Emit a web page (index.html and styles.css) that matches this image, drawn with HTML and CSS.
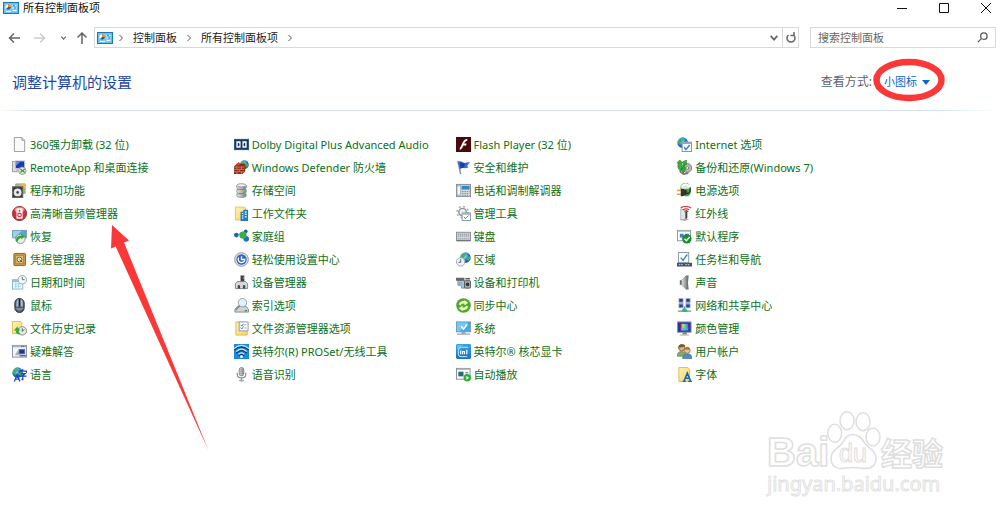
FILE: index.html
```html
<!DOCTYPE html>
<html lang="zh-CN">
<head>
<meta charset="utf-8">
<title>所有控制面板项</title>
<link rel="stylesheet" href="styles.css">
</head>
<body>
<svg class="defs" aria-hidden="true">
  <defs>
    <linearGradient id="gBlue" x2="0" y2="1"><stop stop-color="#3ba2e6"/><stop offset="1" stop-color="#1374c4"/></linearGradient>
    <radialGradient id="gGlobe" cx=".4" cy=".35"><stop stop-color="#c9f1ff"/><stop offset=".6" stop-color="#3b9be0"/><stop offset="1" stop-color="#1558b5"/></radialGradient>
    <linearGradient id="gGrey"><stop stop-color="#e8e8e8"/><stop offset="1" stop-color="#8a8a8a"/></linearGradient>
    <linearGradient id="gFold" x2="1" y2="1"><stop stop-color="#fff3b0"/><stop offset="1" stop-color="#f6d467"/></linearGradient>
    <linearGradient id="gRain"><stop stop-color="#f22"/><stop offset=".3" stop-color="#e3e32b"/><stop offset=".6" stop-color="#1edce0"/><stop offset="1" stop-color="#c22be8"/></linearGradient>
  </defs>
  <symbol id="panel" viewBox="0 0 16 12">
    <rect x=".5" y=".5" width="15" height="11" fill="#5cb8ec" stroke="#1878b8"/>
    <rect x="1.500" y="1.500" width="13" height="9" fill="#7cc9f3"/>
    <circle cx="5" cy="5" r="2.600" fill="#fff"/><path d="M5 5V2a3 3 0 0 1 3 3z" fill="#f08a24"/><path d="M5 5h3a3 3 0 0 1-5 2z" fill="#1d5fae"/>
    <path d="M9.500 3.500h4M9.500 6h4M9.500 8.500h4M3 9.500h5" stroke="#fff" stroke-width="1.200"/><circle cx="11" cy="3.500" r=".8" fill="#1d5fae"/><circle cx="12" cy="6" r=".8" fill="#1d5fae"/>
  </symbol>
  <symbol id="globe" viewBox="0 0 16 16">
    <circle cx="8" cy="8" r="7.500" fill="url(#gGlobe)"/>
    <path d="M3 4l3-2 3 1-1 3-3 2-1 3-2-3zM10 7l4-1 1 3-3 4-2-2z" fill="#45b34b"/>
  </symbol>
</svg>

<header class="titlebar">
  <svg class="app-icon"><use href="#panel"/></svg>
  <span class="window-title">所有控制面板项</span>
  <div class="window-controls">
    <button type="button" aria-label="最小化"><svg viewBox="0 0 12 12"><path d="M1 6.500h10"/></svg></button>
    <button type="button" aria-label="最大化"><svg viewBox="0 0 12 12"><path d="M1.500 1.500h9v9h-9z"/></svg></button>
    <button type="button" aria-label="关闭"><svg viewBox="0 0 12 12"><path d="M1 1l10 10M11 1L1 11"/></svg></button>
  </div>
</header>

<div class="toolbar">
  <div class="nav-buttons">
    <button type="button" aria-label="后退"><svg viewBox="0 0 12 12"><path d="M12 6H1.500M6 1.500L1.500 6 6 10.500"/></svg></button>
    <button type="button" class="off" aria-label="前进"><svg viewBox="0 0 12 12"><path d="M0 6h10.500M6 1.500L10.500 6 6 10.500"/></svg></button>
    <button type="button" class="small" aria-label="最近位置"><svg viewBox="0 0 12 12"><path d="M2 3.500l4 4.500 4-4.500" stroke-width="2"/></svg></button>
    <button type="button" aria-label="向上"><svg viewBox="0 0 12 12"><path d="M6 12V1M1.500 5.500L6 1l4.500 4.500"/></svg></button>
  </div>
  <div class="address">
    <svg class="app-icon"><use href="#panel"/></svg>
    <nav class="crumbs" aria-label="路径">
      <svg class="sep" viewBox="0 0 6 6"><path d="M1.500 0l3 3-3 3"/></svg>
      <a href="#">控制面板</a>
      <svg class="sep" viewBox="0 0 6 6"><path d="M1.500 0l3 3-3 3"/></svg>
      <a href="#">所有控制面板项</a>
      <svg class="sep" viewBox="0 0 6 6"><path d="M1.500 0l3 3-3 3"/></svg>
    </nav>
    <button type="button" class="drop" aria-label="历史"><svg viewBox="0 0 12 12"><path d="M2 3.500L6 8l4-4.500"/></svg></button>
    <button type="button" class="refresh" aria-label="刷新"><svg viewBox="0 0 12 12"><path d="M8.500 3a4 4 0 1 1-5 0M9 0v3.500H5.500"/></svg></button>
  </div>
  <label class="search">
    <input type="search" placeholder="搜索控制面板" aria-label="搜索控制面板">
    <svg viewBox="0 0 12 12"><circle cx="7.500" cy="4.500" r="3.500"/><path d="M5 7L1 11"/></svg>
  </label>
</div>

<main>
  <div class="heading">
    <h1>调整计算机的设置</h1>
    <div class="view">
      <label for="view">查看方式:</label>
      <div class="view-select">
        <select id="view"><option>小图标</option><option>大图标</option><option>类别</option></select>
        <svg class="caret" viewBox="0 0 8 5"><path d="M0 0h8L4 5z"/></svg>
        <svg class="ring" viewBox="0 0 72 44"><ellipse cx="36" cy="22" rx="32.500" ry="18"/></svg>
      </div>
    </div>
  </div>

  <ul class="items">
    <li><a href="#"><svg viewBox="0 0 16 16"><path d="M2.500 .5h8l3 3v12h-11z" fill="#fafafa" stroke="#999"/><path d="M10.500 .5v3h3" fill="#ddd" stroke="#999"/></svg>360强力卸载 (32 位)</a></li>
    <li><a href="#"><svg viewBox="0 0 16 16"><rect y="2" width="16" height="12" fill="#2b5f94"/><rect x="1" y="3" width="14" height="10" fill="#16395e"/><path d="M2.500 4.500H7v7H2.500zM13.500 4.500H9v7h4.500z" fill="#fff"/><path d="M4 6a2 2 0 0 1 0 4zM12 6a2 2 0 0 0 0 4z" fill="#16395e"/></svg>Dolby Digital Plus Advanced Audio</a></li>
    <li><a href="#"><svg viewBox="0 0 16 16"><rect width="16" height="16" fill="#4a0a0c"/><path d="M12 3C8.500 3 8 6 7 8.500S5.500 12.500 4 12.500M7 8h4" stroke="#fff" stroke-width="2" fill="none"/></svg>Flash Player (32 位)</a></li>
    <li><a href="#"><svg viewBox="0 0 16 16"><use href="#globe" width="12" height="12"/><rect x="5.500" y="5.500" width="10" height="10" fill="#fff" stroke="#7d92a8"/><path d="M5.500 6.500h10" stroke="#8fa8c0" stroke-width="2"/><path d="M7.500 11l2 2.500 4-5" fill="none" stroke="#2c7fd6" stroke-width="1.500"/></svg>Internet 选项</a></li>

    <li><a href="#"><svg viewBox="0 0 16 16"><rect x=".5" y="1.500" width="5" height="11" fill="#ddd" stroke="#999"/><rect x="3.500" y="1" width="10" height="8" fill="#1b37b8" stroke="#c7c7cf"/><path d="M4 1.500l5 0-5 5z" fill="#6a8cf0"/><circle cx="11" cy="11.500" r="4" fill="#e4e4e4" stroke="#999"/><path d="M9 9.500l2 2-2 2M13.500 9.500l-2 2 2 2" stroke="#2ea32e" stroke-width="1.300" fill="none"/></svg>RemoteApp 和桌面连接</a></li>
    <li><a href="#"><svg viewBox="0 0 16 16"><use href="#globe" x="6" width="10" height="10"/><path d="M0 7l3-3h9v8l-3 3H0z" fill="#8c2d1a"/><path d="M0 7.500h11M0 10h11M0 12.500h11M3 7v3M8 7v3M5.500 10v2.500M3 12.500V15M8 12.500V15" stroke="#d98b70" stroke-width=".8"/><path d="M2 5l3-3 2 2-2 2z" fill="#c94b28"/></svg>Windows Defender 防火墙</a></li>
    <li><a href="#"><svg viewBox="0 0 16 16"><path d="M2 1l3 14" stroke="#8594a8" stroke-width="1.600"/><path d="M2 2c4-2 5 2 8 1l5-1-3 4 1 2c-4 2-6-1-9 2z" fill="#3e6bd0"/><path d="M4 3c3-1 4 1 6 1l-2 4-3 1z" fill="#1c3fa2"/></svg>安全和维护</a></li>
    <li><a href="#"><svg viewBox="0 0 16 16"><circle cx="11" cy="8.500" r="4.700" fill="#b8b8b8" stroke="#777"/><circle cx="11" cy="8.500" r="1.500" fill="#fff" stroke="#777"/><path d="M0 3l3-3 3 3H4.500l2 5-3 4L1 8V3zM6 2l4-2 0 5-2 0 1 5-2 4-3-4 3-3z" fill="#3caf38" stroke="#1d7a1f" stroke-width=".6"/><path d="M3 12l4 3 5-1" stroke="#777" stroke-width="2" fill="none"/></svg>备份和还原(Windows 7)</a></li>

    <li><a href="#"><svg viewBox="0 0 16 16"><path d="M4 1h10v10H4z" fill="#9acb6a" stroke="#999"/><path d="M9 1h5v5H9z" fill="#f5b24e"/><rect x=".5" y="4" width="11" height="11.500" fill="#343a40" stroke="#666"/><circle cx="6" cy="10" r="4.200" fill="#e6e9ec"/><circle cx="6" cy="10" r="1.400" fill="#444"/></svg>程序和功能</a></li>
    <li><a href="#"><svg viewBox="0 0 16 16"><g fill="url(#gGrey)" stroke="#777" stroke-width=".7"><path d="M3 11.500v2c0 2.500 10 2.500 10 0v-2zM3 7v2.500c0 2.500 10 2.500 10 0V7zM3 2.500V5c0 2.500 10 2.500 10 0V2.500z"/><ellipse cx="8" cy="2.500" rx="5" ry="1.800" fill="#eee"/></g><path d="M10 5.500h1.500M10 10h1.500M10 14h1.500" stroke="#3cad3c"/></svg>存储空间</a></li>
    <li><a href="#"><svg viewBox="0 0 16 16"><rect x=".5" y="1.500" width="15" height="13" fill="#d8dde2" stroke="#858c94"/><path d="M1 3h4v10H1z" fill="#f6f6f6" stroke="#8a939c" stroke-width=".8"/><rect x="6" y="3" width="8.500" height="4" fill="#3289c4"/><path d="M6.500 9h8M6.500 11h8M6.500 13h8" stroke="#73808c" stroke-dasharray="1.500 1"/></svg>电话和调制解调器</a></li>
    <li><a href="#"><svg viewBox="0 0 16 16"><circle cx="9" cy="5" r="5" fill="#d7efd4" stroke="#82aa82"/><path d="M5 4q4-5 9 0" stroke="#fff" stroke-width="2" fill="none"/><path d="M8 6h6q2 5-2 8H8z" fill="#3fa744"/><path d="M0 8h4M0 12h4" stroke="#d7a72f" stroke-width="1.500"/><path d="M4 6c5 0 7 2 7 4s-3 4-7 4z" fill="#333"/><path d="M10 11q5 1 4-6" stroke="#333" stroke-width="1.500" fill="none"/></svg>电源选项</a></li>

    <li><a href="#"><svg viewBox="0 0 16 16"><circle cx="8" cy="8" r="7.500" fill="#c8323b" stroke="#9a1c27"/><ellipse cx="8" cy="4" rx="5.500" ry="3" fill="#e8868c"/><rect x="4.800" y="2.500" width="6.500" height="11" fill="#fff"/><circle cx="8" cy="9.500" r="1.900" fill="none" stroke="#c8323b" stroke-width="1.300"/><circle cx="8" cy="5" r="1" fill="#c8323b"/></svg>高清晰音频管理器</a></li>
    <li><a href="#"><svg viewBox="0 0 16 16"><path d="M1.500 1h8l3 1v13H1.500z" fill="url(#gFold)" stroke="#e0b84d" stroke-width=".8"/><path d="M7 6h3V4h5v12H7z" fill="#1a7dc0"/><path d="M8.500 8h1.500M11.500 6.500h2M8.500 10.500h1.500M11.500 9h2M11.500 11.500h2M8.500 13h1.500" stroke="#fff" stroke-width="1.300"/></svg>工作文件夹</a></li>
    <li><a href="#"><svg viewBox="0 0 16 16"><circle cx="7" cy="6.500" r="4" fill="#eee" stroke="#8c949c" stroke-width="1.500"/><circle cx="7" cy="6.500" r="6" fill="none" stroke="#a2a9b0" stroke-width="1.500" stroke-dasharray="2 2.700"/><rect x="6.500" y="7.500" width="9" height="8" fill="#fff" stroke="#8798a8"/><path d="M6.500 8.500h9" stroke="#9aabba" stroke-width="1.500"/><path d="M8.500 11.500l1.500 2 3.500-3.500" stroke="#2f80d0" fill="none"/></svg>管理工具</a></li>
    <li><a href="#"><svg viewBox="0 0 16 16"><path d="M4 3l5 2v9l-5 1z" fill="#e6e6e6" stroke="#999" stroke-width=".7"/><path d="M9 5l2-1v9l-2 1z" fill="#444"/><path d="M3 14.500l7-1 3 1-5 1.500z" fill="#aaa"/><path d="M4 2q5-3 11 0M6 4q4-2 7 0M8 6q2-1 4 0" stroke="#d4383e" stroke-width="1.300" fill="none"/></svg>红外线</a></li>

    <li><a href="#"><svg viewBox="0 0 16 16"><path d="M.5 1.500h15v8h-15z" fill="#4aa8e8" stroke="#7d97ab"/><path d="M1 2h9l-7 7H1z" fill="#92d3f8"/><circle cx="9" cy="10.500" r="5" fill="#e7efe7" stroke="#8c8c8c"/><path d="M4 13q0-6 6-6l-.5-2L14 8l-4 3V9.500q-3 0-4 4z" fill="#38a53a"/></svg>恢复</a></li>
    <li><a href="#"><svg viewBox="0 0 16 16"><path d="M3 7l9-5" stroke="#89c6dd"/><circle cx="2.500" cy="6.500" r="2.500" fill="#1b67b7"/><circle cx="12.500" cy="2.500" r="2" fill="#1c62ae"/><circle cx="13" cy="10.500" r="3" fill="#1f70c0"/><circle cx="9.500" cy="6.500" r="3.900" fill="#3cae45"/></svg>家庭组</a></li>
    <li><a href="#"><svg viewBox="0 0 16 16"><rect x=".5" y="3.500" width="15" height="9" fill="#d2d8dd" stroke="#858d94"/><path d="M2 5.500h12M2 7.500h12M2 10.500h12" stroke="#858d94" stroke-dasharray="1.500 .6"/><path d="M1 12.500h14" stroke="#62686e"/></svg>键盘</a></li>
    <li><a href="#"><svg viewBox="0 0 16 16"><rect x=".5" y="1.500" width="14" height="11" fill="#fff" stroke="#8595a5"/><path d="M1 2.500h13" stroke="#bdc8d1" stroke-width="1.500"/><path d="M3 5h4v4H3zM8.500 5h4v3h-4z" fill="#3a80cc"/><circle cx="10.500" cy="10.500" r="5" fill="#168c2a"/><path d="M8 10.500l2 2 3.500-4" stroke="#fff" stroke-width="1.500" fill="none"/></svg>默认程序</a></li>

    <li><a href="#"><svg viewBox="0 0 16 16"><rect x="2" y="1.500" width="12.500" height="13" rx="1" fill="#c69b48" stroke="#8a6420"/><rect x="4" y="3.500" width="8.500" height="9" fill="#d9ba78" stroke="#a37b35" stroke-width=".8"/><circle cx="8" cy="8" r="2.500" fill="#f3e6c4" stroke="#7c6238"/><path d="M8 8l3 3" stroke="#7c6238"/></svg>凭据管理器</a></li>
    <li><a href="#"><svg viewBox="0 0 16 16"><circle cx="8" cy="8" r="7.300" fill="#e1e5e9" stroke="#8994a0"/><circle cx="8" cy="8" r="5.500" fill="#2d65c8"/><path d="M8 4.500V8h3.500A3.500 3.500 0 1 1 5 6" stroke="#fff" stroke-width="1.400" fill="none"/></svg>轻松使用设置中心</a></li>
    <li><a href="#"><svg viewBox="0 0 16 16"><use href="#globe" x="4" width="12" height="12"/><circle cx="5" cy="10.500" r="4.500" fill="#f0f4f6" stroke="#9ba5ad"/><path d="M5 7.500v3.500H2.500" stroke="#4b6277" fill="none"/></svg>区域</a></li>
    <li><a href="#"><svg viewBox="0 0 16 16"><rect x="1.500" y=".5" width="11" height="11" fill="#fff" stroke="#8293a4"/><path d="M4 6l2.500 3L11 2.500" stroke="#2b83d4" stroke-width="1.500" fill="none"/><rect y="11.500" width="16" height="4" fill="#44576a"/><path d="M2 13.500h4M9 13.500h5" stroke="#d7e1e8" stroke-dasharray="1.500 1"/></svg>任务栏和导航</a></li>

    <li><a href="#"><svg viewBox="0 0 16 16"><rect x=".5" y="5" width="11" height="10" fill="#eaf7fc" stroke="#8fb5c7"/><path d="M1 6.500h10" stroke="#7fc2df" stroke-width="2"/><path d="M2.500 9.500h7M2.500 12h7M4 8v6M7 8v6" stroke="#9fd2e5" stroke-width=".8"/><circle cx="11" cy="5" r="4.500" fill="#f5f8fa" stroke="#98a3ac"/><path d="M11 2v3h2.500" stroke="#54697a" fill="none"/></svg>日期和时间</a></li>
    <li><a href="#"><svg viewBox="0 0 16 16"><path d="M7 .5h4v8H7z" fill="#3a3f44"/><rect x="9.500" y="2" width="1" height="2" fill="#54c454"/><path d="M1.500 9l2-2h9l2 2v5.500h-13z" fill="#d5d8da" stroke="#808488"/><path d="M4 11h2.500v3.500H4zM9.500 11H12v3.500H9.500z" fill="#444"/></svg>设备管理器</a></li>
    <li><a href="#"><svg viewBox="0 0 16 16"><path d="M0 3h9v4H2V6H0z" fill="#62686e"/><path d="M2 6h7v8H6V8H4v3H2z" fill="#c5cbd0" stroke="#63696f" stroke-width=".7"/><path d="M4 8h3v4H4z" fill="#73c5ec"/><rect x="9" y="6" width="6.500" height="8" rx="1" fill="#a4abb1" stroke="#555"/><circle cx="12.300" cy="10" r="1.900" fill="#303539"/><path d="M10 4h5" stroke="#48525b" stroke-width="1.500"/></svg>设备和打印机</a></li>
    <li><a href="#"><svg viewBox="0 0 16 16"><path d="M3 5.500h3v5H3z" fill="#66707a"/><path d="M5 5.500l5-5v15l-5-5z" fill="url(#gGrey)" stroke="#888" stroke-width=".7"/><path d="M10 .5h2.500q-1.500 7.500 0 15H10z" fill="#6d757c"/></svg>声音</a></li>

    <li><a href="#"><svg viewBox="0 0 16 16"><rect x="3" y=".5" width="10" height="15" rx="5" fill="#4d5e70" stroke="#28333f"/><path d="M5 3q1-2 2-2v8H4.500zM9 1q2 0 2.500 3v5H9z" fill="#aebdcc"/><path d="M8 1v8" stroke="#18202a" stroke-width="1.500"/><path d="M4 10q4 2 8 0v1q-4 5-8 0z" fill="#8294a7"/></svg>鼠标</a></li>
    <li><a href="#"><svg viewBox="0 0 16 16"><path d="M1 12l3-3h9l2.500 3v3H1z" fill="#cfd3d6" stroke="#84898e"/><circle cx="9" cy="5" r="4.500" fill="#dff3fb" stroke="#8e9ba5"/><path d="M6 8l-4 4.500" stroke="#7c868f" stroke-width="1.800"/><path d="M11.500 13.500H14" stroke="#35a637" stroke-width="1.500"/></svg>索引选项</a></li>
    <li><a href="#"><svg viewBox="0 0 16 16"><circle cx="8" cy="8" r="7.800" fill="#48aa30"/><path d="M3 7q1-4 6-4l0-1 4 3-4 3V6Q6 5 5 8zM13 9q-1 4-6 4v1l-4-3 4-3v2q3 1 4-2z" fill="#f3f6b5"/></svg>同步中心</a></li>
    <li><a href="#"><svg viewBox="0 0 16 16"><g fill="#243bb4" stroke="#aab5c4" stroke-width=".8"><path d="M2 .5h4.500v4H2zM9.500 .5H14v4H9.500zM2 6.500h4.500v4H2zM9.500 6.500H14v4H9.500z"/></g><path d="M2 5.500h5M9 5.500h5" stroke="#7e8997"/><path d="M8 9v4M1 14h14" stroke="#6b9a8d" stroke-width="1.500"/><path d="M5 13l3-3 3 3v2H5z" fill="#34b779"/></svg>网络和共享中心</a></li>

    <li><a href="#"><svg viewBox="0 0 16 16"><path d="M.5 .5h9l1 1v12H.5z" fill="url(#gFold)" stroke="#e0bc50"/><circle cx="11" cy="10.500" r="4.500" fill="#e5e8e8" stroke="#838a8c"/><path d="M11 8v3l2-2" stroke="#4b5358" fill="none"/><path d="M2 10l3.500-4L9 10H7q0 3 3 4-6 1-6-4z" fill="#36ad36"/></svg>文件历史记录</a></li>
    <li><a href="#"><svg viewBox="0 0 16 16"><path d="M2 1h8l4 1v13H2z" fill="url(#gFold)" stroke="#dfb94e"/><rect x="5.500" y="1" width="9.500" height="9.500" fill="#fff" stroke="#8b98a4"/><path d="M7 4l1.500 1.500L10 3M7 7l1.500 1.500L10 6" stroke="#2c7bce" fill="none"/><path d="M11 4h2.500M11 7.500h2.500" stroke="#9ab"/></svg>文件资源管理器选项</a></li>
    <li><a href="#"><svg viewBox="0 0 16 16"><rect x=".5" y="1" width="15" height="10.500" fill="#41a9ef" stroke="#7698b3"/><path d="M1 1.500h12L4 11H1z" fill="#76c7f8"/><path d="M5.500 5.500l2.500 3 4-5" stroke="#fff" stroke-width="1.600" fill="none"/><path d="M1 14h14M6 12.500h4" stroke="#9ba7b1" stroke-width="1.500"/></svg>系统</a></li>
    <li><a href="#"><svg viewBox="0 0 16 16"><rect x=".5" y="1" width="14.500" height="11" fill="#2834a8" stroke="#8d939c"/><rect x="4" y="3" width="8" height="7" fill="url(#gRain)"/><path d="M4 7h8v3H4z" fill="#3bd" opacity=".6"/><path d="M7 12h3l1 2.500H5z" fill="#7c8288"/><path d="M3 15h10" stroke="#aaa"/></svg>颜色管理</a></li>

    <li><a href="#"><svg viewBox="0 0 16 16"><rect x=".5" y="1.500" width="15" height="12.500" fill="#f3f5f8" stroke="#8490a0"/><path d="M1 2.500h14" stroke="#a9b2be" stroke-width="2"/><path d="M10 2.500h1M12 2.500h1" stroke="#33404e"/><path d="M3 12l3-5 2 5z" fill="#aab2bb"/><rect x="7.500" y="6" width="6" height="4.500" fill="#1c32b0" stroke="#5d6b83"/><path d="M8 12.500h7" stroke="#5666a0" stroke-width="1.500"/></svg>疑难解答</a></li>
    <li><a href="#"><svg viewBox="0 0 16 16"><rect width="16" height="16" fill="#1a8ade"/><path d="M0 6.500q8-7 16 0M2.500 9.500q5.500-5 11 0M5 12.500q3-3 6 0" stroke="#173e60" stroke-width="1.500" fill="none"/><path d="M0 5q8-7 16 0M2.500 8q5.500-5 11 0M5 11q3-3 6 0" stroke="#d8efff" stroke-width="1.200" fill="none"/><circle cx="8" cy="13.500" r="1.500" fill="#fff"/></svg>英特尔(R) PROSet/无线工具</a></li>
    <li><a href="#"><svg viewBox="0 0 16 16"><rect width="16" height="16" rx="1.500" fill="url(#gBlue)"/><path d="M1 1h7L1 6z" fill="#68baf0"/><path d="M13 3.500H6Q2.500 3.500 2.500 7v4q0 2.500 3 2.500H12" fill="none" stroke="#d5efff"/><path d="M5 11V7M7 11V8h2v3M11.500 6v5" stroke="#fff" fill="none" stroke-width="1.200"/></svg>英特尔® 核芯显卡</a></li>
    <li><a href="#"><svg viewBox="0 0 16 16"><circle cx="5" cy="4" r="3.300" fill="#dfb27f" stroke="#8b663c"/><path d="M1.500 4q0-4 4-3.800T8.500 3z" fill="#7d5b31"/><path d="M0 13q0-5 5-5t4 5z" fill="#7fae6f" stroke="#607b54" stroke-width=".7"/><circle cx="11" cy="7" r="3" fill="#ebc493" stroke="#9d7747"/><path d="M8 6q0-3 3-3t3 3z" fill="#a67c38"/><path d="M6 15.500q0-5 5-5t5 5z" fill="#4e8dc4" stroke="#416e94" stroke-width=".7"/></svg>用户帐户</a></li>

    <li><a href="#"><svg viewBox="0 0 16 16"><use href="#globe" width="12" height="12"/><path d="M2.500 15.500L5.500 8l3 7.500M4 13h3.500" stroke="#234bb5" stroke-width="1.400" fill="none"/><path d="M7.500 6V4.500h8V6M11.500 2.500v2M9 7h5l-2.500 2v4.500l-1.500-.5M7.500 9.800h8" stroke="#1a43b5" stroke-width="1.300" fill="none"/></svg>语言</a></li>
    <li><a href="#"><svg viewBox="0 0 16 16"><rect x="5.500" y=".5" width="5" height="9" rx="2.500" fill="url(#gGrey)" stroke="#858b92"/><path d="M5.500 3h5M5.500 5h5M5.500 7h5" stroke="#858b92" stroke-width=".6"/><path d="M3.500 6v2q0 3.500 4.500 3.500T12.500 8V6M8 11.500V14" stroke="#8c929b" stroke-width="1.300" fill="none"/><ellipse cx="8" cy="14.500" rx="2.800" ry="1.200" fill="#a4a9b0"/></svg>语音识别</a></li>
    <li><a href="#"><svg viewBox="0 0 16 16"><rect x=".5" y="1.500" width="14.500" height="11.500" fill="#fff" stroke="#858f99"/><path d="M1 2.500h13.500" stroke="#b1b9c1" stroke-width="1.500"/><rect x="2.500" y="5" width="5.500" height="5" fill="#286a78"/><path d="M10 6h3M10 8h3" stroke="#789" stroke-width="1.200"/><circle cx="12" cy="11.500" r="4" fill="#36ad39"/><path d="M11 9.500l3 2-3 2z" fill="#fff"/></svg>自动播放</a></li>
    <li><a href="#"><svg viewBox="0 0 16 16"><path d="M2 .5h9l2.500 2v13H2z" fill="url(#gFold)" stroke="#e2bb4d"/><path d="M6 15.500h3.500M12 15.500h4M7.500 15L11 6.500 14.500 15M8.500 12h5" stroke="#1b67af" stroke-width="1.600" fill="none"/></svg>字体</a></li>
  </ul>

  <svg class="arrow" viewBox="0 0 98 226" aria-hidden="true"><path d="M1 0l17 15.500-5 2L97.500 225.500 4.700 21.500 0 23.500z"/></svg>

  <svg class="watermark" viewBox="0 0 182 92" role="img" aria-label="Baidu 经验">
    <g class="mark">
      <text class="bai" x="1" y="61">Bai</text>
      <ellipse cx="68.700" cy="28.300" rx="7" ry="9"/><ellipse cx="81" cy="15.700" rx="7" ry="9"/><ellipse cx="97" cy="16.700" rx="7" ry="9"/><ellipse cx="107" cy="32" rx="7" ry="9"/>
      <path d="M87 29.500c6 0 9 4 12 9 4 5 11 7 11 15 0 7-5 10-10 10-5 0-8-1-13-1s-8 1-13 1c-5 0-9-4-9-10 0-8 7-10 11-15 3-5 5-9 11-9z"/>
      <text class="du" x="73" y="57">du</text>
      <text class="jy" x="115" y="60">经验</text>
      <text class="site" x="1" y="86">jingyan.baidu.com</text>
    </g>
  </svg>
</main>
</body>
</html>
```
FILE: styles.css
```css
* { box-sizing: border-box; }

body {
  margin: 0;
  position: relative;
  min-height: 100vh;
  background: #fff;
  color: #222;
  font: 11px/16px "Noto Sans", "Noto Sans CJK SC", sans-serif;
}

svg { display: block; flex: none; }
.defs { position: absolute; width: 0; height: 0; }

button {
  display: flex;
  align-items: center;
  justify-content: center;
  padding: 0;
  border: 0;
  background: none;
}
button svg {
  width: 12px;
  height: 12px;
  fill: none;
  stroke: #666;
  stroke-width: 1.5;
}

a { color: inherit; text-decoration: none; }

.app-icon { width: 16px; height: 12px; }

.titlebar {
  display: flex;
  align-items: center;
  gap: 4px;
  height: 16px;
  padding-left: 3px;
}
.window-title { color: #111; }
.window-controls { display: flex; gap: 14px; margin-left: auto; }
.window-controls button { width: 28px; height: 16px; }
.window-controls svg { stroke: #111; stroke-width: 1; }

.toolbar {
  display: flex;
  align-items: center;
  padding: 11px 4px 0 8px;
}
.nav-buttons {
  display: flex;
  align-items: center;
  gap: 14px;
  padding-right: 6px;
}
.nav-buttons button { width: 12px; }
.nav-buttons .off svg { stroke: #ccc; }
.nav-buttons .small { width: 6px; margin-right: -4px; }
.nav-buttons .small svg { width: 7px; }

.address {
  flex: 1;
  display: flex;
  align-items: center;
  height: 21px;
  padding-left: 2px;
  border: 1px solid #d9d9d9;
}
.crumbs {
  flex: 1;
  display: flex;
  align-items: center;
  gap: 9px;
  padding-left: 5px;
}
.sep { width: 6px; height: 6px; fill: none; stroke: #555; }
.address button { width: 16px; align-self: stretch; }
.address .drop svg { width: 10px; stroke-width: 2; }
.address .refresh { border-left: 1px solid #d9d9d9; }

.search {
  display: flex;
  align-items: center;
  width: 186px;
  height: 21px;
  margin-left: 11px;
  padding: 0 7px;
  border: 1px solid #d9d9d9;
}
.search input {
  flex: 1;
  min-width: 0;
  padding: 0;
  border: 0;
  outline: 0;
  background: none;
  font: inherit;
}
.search input::placeholder { color: #666; opacity: 1; }
.search svg {
  width: 11px;
  height: 11px;
  fill: none;
  stroke: #555;
  stroke-width: 1.4;
}

.heading {
  display: flex;
  align-items: center;
  justify-content: space-between;
  height: 63px;
  padding: 6px 56px 0 12px;
  border-bottom: 1px solid;
  border-image: linear-gradient(to right, #fff, #d6e6f7 3%, #d6e6f7 94%, #fff) 1;
}
h1 {
  margin: 0;
  color: #1d49a6;
  font-size: 15px;
  line-height: 20px;
  font-weight: 400;
}
.view { display: flex; align-items: center; }
.view label { color: #5a6478; font-size: 12px; }
.view-select {
  position: relative;
  display: flex;
  align-items: center;
  margin-left: 12px;
}
.view-select select {
  appearance: none;
  width: 60px;
  padding: 0;
  border: 0;
  background: none;
  color: #0a66cc;
  font: inherit;
}
.caret {
  position: absolute;
  left: 38px;
  width: 8px;
  height: 5px;
  fill: #0a66cc;
  pointer-events: none;
}
.ring {
  position: absolute;
  left: -11px;
  top: -16px;
  width: 72px;
  height: 44px;
  fill: none;
  stroke: #fb3838;
  stroke-width: 6.5;
  pointer-events: none;
}

.items {
  display: grid;
  grid-template-columns: repeat(4, minmax(0, 1fr));
  margin: 0;
  padding: 22px 101px 24px 12px;
  list-style: none;
}
.items a {
  display: flex;
  align-items: center;
  gap: 3px;
  height: 23px;
  color: #0d7019;
  white-space: nowrap;
}
.items svg { width: 15px; height: 15px; }

.arrow {
  position: absolute;
  left: 111px;
  top: 225px;
  width: 98px;
  height: 226px;
  fill: #fb3838;
  pointer-events: none;
}

.watermark {
  position: absolute;
  right: 52px;
  bottom: 22px;
  width: 182px;
  height: 92px;
}
.mark { fill: #fff; stroke: #dedede; stroke-width: 1.5; }
.bai { font: bold 40px "Liberation Sans", sans-serif; }
.du { font: 25px "Liberation Sans", sans-serif; stroke-width: 1; }
.jy { font: bold 31px "Noto Sans CJK SC", sans-serif; }
.site { font: 20px "Noto Sans", sans-serif; stroke: #e2e2e2; stroke-width: 1; }
```
